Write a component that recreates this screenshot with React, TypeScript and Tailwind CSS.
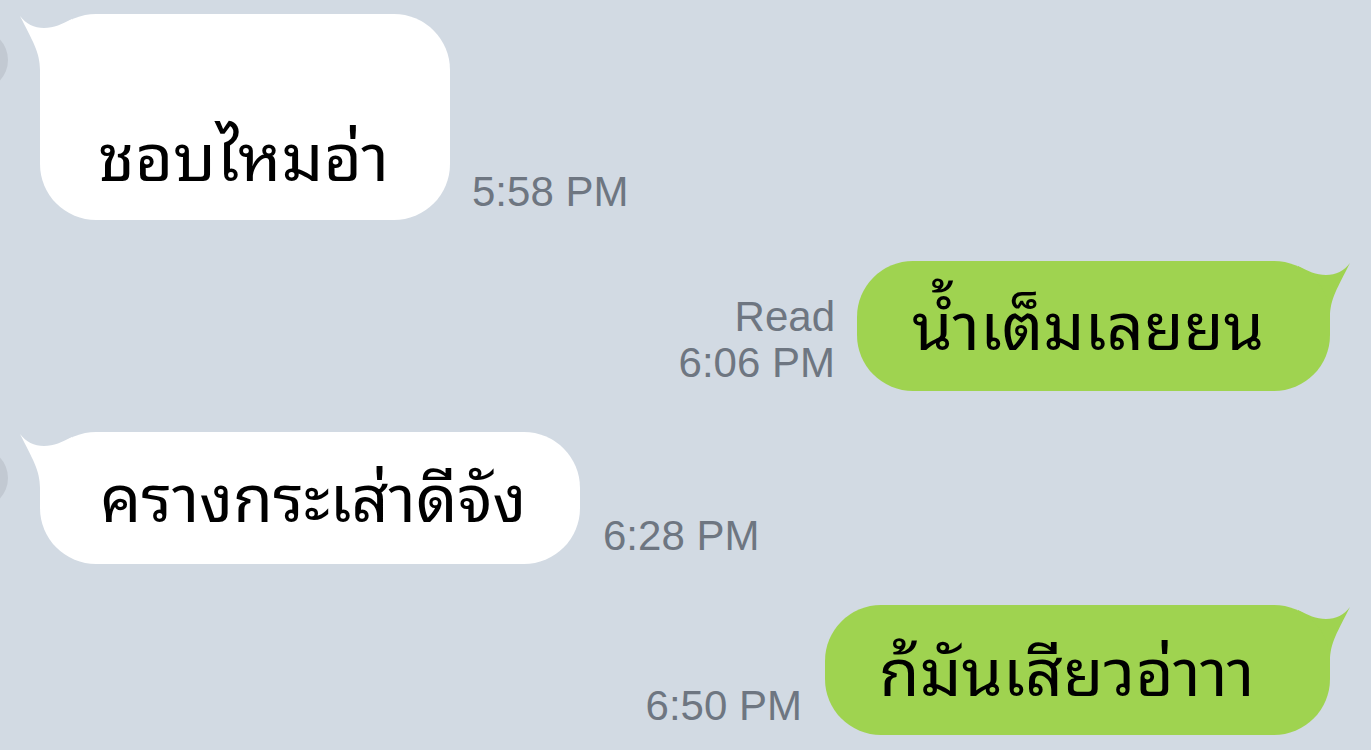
import React from 'react'

const thai = { fontFamily: '"Noto Sans Thai Looped", Thonburi, Garuda, Loma, "Noto Sans Thai", "Noto Sans", sans-serif' }

function TailLeft() {
    return (
        <svg className="absolute left-[-22px] top-0" width="56" height="56" viewBox="0 0 56 56">
            <path d="M2 2 C 8 10, 16 14, 26 14 C 36 14, 44 10, 54 5 L 54 56 L 22 56 C 22 38, 14 26, 2 2 Z" fill="#ffffff" />
        </svg>
    )
}

function TailRight() {
    return (
        <svg className="absolute right-[-22px] top-0" width="56" height="56" viewBox="0 0 56 56">
            <path d="M54 2 C 48 10, 40 14, 30 14 C 20 14, 12 10, 2 5 L 2 56 L 34 56 C 34 38, 42 26, 54 2 Z" fill="#9fd350" />
        </svg>
    )
}

function Time({ children }: { children: React.ReactNode }) {
    return (
        <div className="text-[42px] leading-[46px] text-[#6e7681] text-right" style={{ fontFamily: '"Liberation Sans", Arial, sans-serif' }}>
            {children}
        </div>
    )
}

function Avatar({ top }: { top: string }) {
    return <div className={`shrink-0 w-[60px] h-[60px] rounded-full bg-[#c2c9d2] ml-[-52px] ${top}`} />
}

export default function App() {
    return (
        <div className="w-[1371px] h-[750px] overflow-hidden bg-[#d2dae3] flex flex-col pt-[14px] gap-[41px]">
            <div className="flex items-start">
                <Avatar top="mt-[16px]" />
                <div className="flex items-end ml-[32px]">
                    <div className="relative">
                        <TailLeft />
                        <div className="relative bg-white rounded-[56px] h-[206px] pt-[68px] w-[410px] pl-[58px] flex items-center text-[66px] text-black" style={thai}>
                            ชอบไหมอ่า
                        </div>
                    </div>
                    <div className="ml-[22px] mb-[5px]">
                        <Time>5:58 PM</Time>
                    </div>
                </div>
            </div>

            <div className="flex items-end justify-end pr-[41px]">
                <div className="mr-[22px] mb-[5px]">
                    <Time>Read</Time>
                    <Time>6:06 PM</Time>
                </div>
                <div className="relative">
                    <TailRight />
                    <div className="relative bg-[#9fd350] rounded-[56px] h-[130px] pb-[8px] w-[473px] pl-[55px] flex items-center text-[65px] text-black" style={thai}>
                        น้ำเต็มเลยยน
                    </div>
                </div>
            </div>

            <div className="flex items-start">
                <Avatar top="mt-[16px]" />
                <div className="flex items-end ml-[32px]">
                    <div className="relative">
                        <TailLeft />
                        <div className="relative bg-white rounded-[56px] h-[132px] pb-[8px] w-[540px] pl-[60px] flex items-center text-[65px] text-black" style={thai}>
                            ครางกระเส่าดีจัง
                        </div>
                    </div>
                    <div className="ml-[23px] mb-[5px]">
                        <Time>6:28 PM</Time>
                    </div>
                </div>
            </div>

            <div className="flex items-end justify-end pr-[41px]">
                <div className="mr-[23px] mb-[6px]">
                    <Time>6:50 PM</Time>
                </div>
                <div className="relative">
                    <TailRight />
                    <div className="relative bg-[#9fd350] rounded-[56px] h-[130px] pb-[8px] w-[505px] pl-[54px] flex items-center text-[66px] text-black" style={thai}>
                        ก้มันเสียวอ่าาา
                    </div>
                </div>
            </div>
        </div>
    )
}
